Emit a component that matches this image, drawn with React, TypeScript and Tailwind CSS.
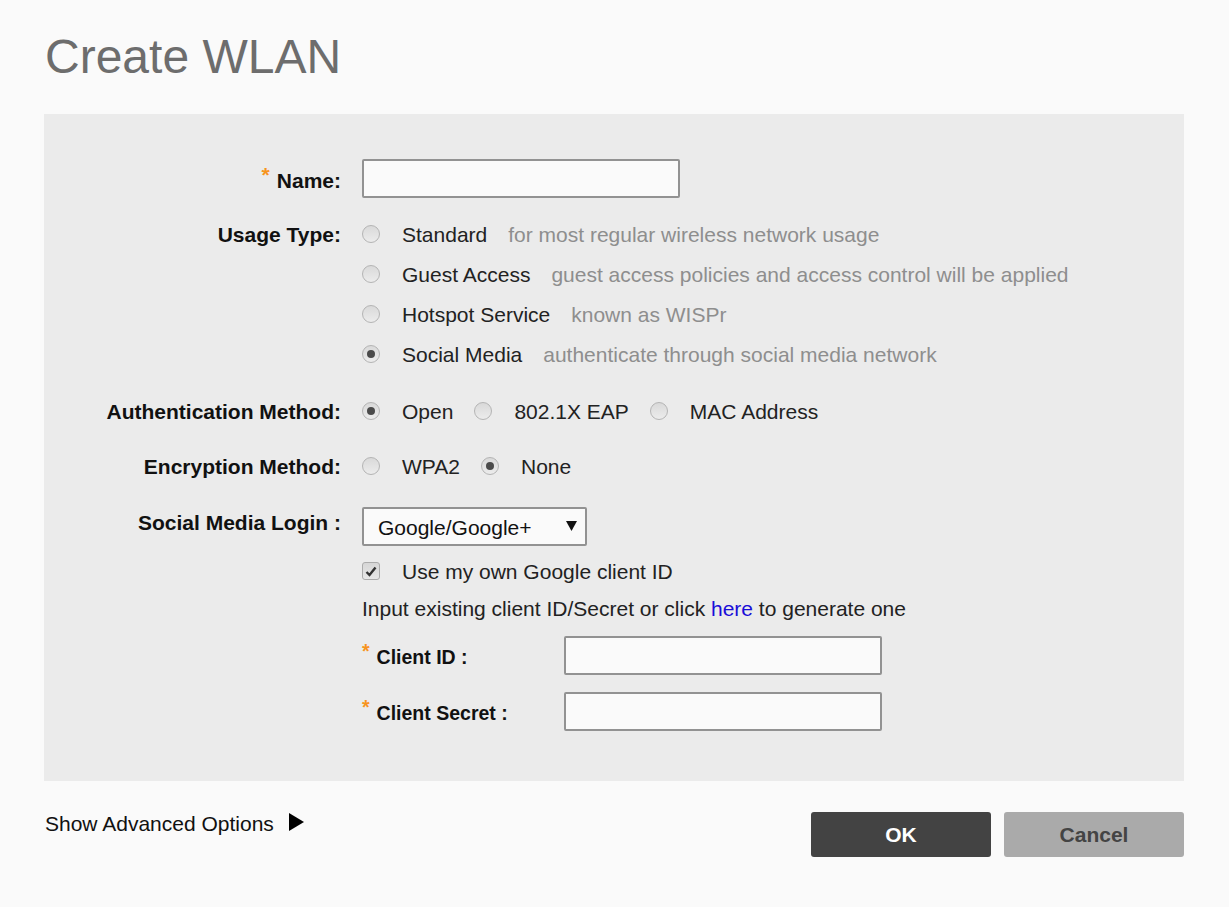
import React from "react";

function Radio({ checked = false }: { checked?: boolean }) {
  return (
    <span className="flex h-[18px] w-[18px] shrink-0 items-center justify-center rounded-full border border-[#b4b4b4] bg-gradient-to-b from-[#d9d9d9] to-[#ececec]">
      {checked && <span className="h-[8px] w-[8px] rounded-full bg-[#4a4a4a]" />}
    </span>
  );
}

function Star() {
  return <span className="relative -top-[6px] mr-[7px] text-[#f7941d]">*</span>;
}

function UsageOption({ label, desc, checked = false }: { label: string; desc: string; checked?: boolean }) {
  return (
    <div className="flex h-[40px] items-center">
      <Radio checked={checked} />
      <span className="relative top-px ml-[22px] text-[#222]">{label}</span>
      <span className="relative top-px ml-[21px] text-[#8e8e8e]">{desc}</span>
    </div>
  );
}

function InlineRadio({ label, checked = false, first = false }: { label: string; checked?: boolean; first?: boolean }) {
  return (
    <div className={`flex items-center ${first ? "" : "ml-[21px]"}`}>
      <Radio checked={checked} />
      <span className="relative top-px ml-[22px] text-[#222]">{label}</span>
    </div>
  );
}

export default function App() {
  return (
    <div className="min-h-[907px] w-[1229px] bg-[#fafafa] font-['Liberation_Sans',Arial,sans-serif] text-[21px] text-[#222]">
      <h1 className="ml-[45px] pt-[33px] text-[48px] leading-none text-[#6d6d6d]">Create WLAN</h1>

      <div className="ml-[44px] mt-[33px] w-[1140px] bg-[#ebebeb] pt-[45px] pb-[50px]">
        {/* Name */}
        <div className="flex h-[39px] items-center">
          <div className="relative top-[2px] w-[297px] text-right font-bold text-[#111]">
            <Star />Name:
          </div>
          <input className="ml-[21px] h-[39px] w-[318px] rounded-[2px] border-2 border-[#929292] bg-[#fafafa] outline-none" />
        </div>

        {/* Usage Type */}
        <div className="mt-[16px] flex items-start">
          <div className="relative top-px flex h-[40px] w-[297px] items-center justify-end font-bold text-[#111]">Usage Type:</div>
          <div className="ml-[21px] flex flex-col">
            <UsageOption label="Standard" desc="for most regular wireless network usage" />
            <UsageOption label="Guest Access" desc="guest access policies and access control will be applied" />
            <UsageOption label="Hotspot Service" desc="known as WISPr" />
            <UsageOption label="Social Media" desc="authenticate through social media network" checked />
          </div>
        </div>

        {/* Authentication */}
        <div className="mt-[17px] flex h-[40px] items-center">
          <div className="relative top-px w-[297px] text-right font-bold text-[#111]">Authentication Method:</div>
          <div className="ml-[21px] flex items-center">
            <InlineRadio label="Open" checked first />
            <InlineRadio label="802.1X EAP" />
            <InlineRadio label="MAC Address" />
          </div>
        </div>

        {/* Encryption */}
        <div className="mt-[15px] flex h-[40px] items-center">
          <div className="relative top-px w-[297px] text-right font-bold text-[#111]">Encryption Method:</div>
          <div className="ml-[21px] flex items-center">
            <InlineRadio label="WPA2" first />
            <InlineRadio label="None" checked />
          </div>
        </div>

        {/* Social Media Login */}
        <div className="mt-[21px] flex items-start">
          <div className="flex h-[31px] w-[297px] items-center justify-end font-bold text-[#111]">Social Media Login :</div>
          <div className="ml-[21px] flex flex-col">
            <div className="flex h-[39px] w-[225px] items-center justify-between rounded-[2px] border-2 border-[#929292] bg-[#fafafa] pl-[14px] pr-[8px]">
              <span className="relative top-px text-[#111]">Google/Google+</span>
              <svg width="11" height="10" viewBox="0 0 11 10" className="mt-[-2px]">
                <polygon points="0,0 11,0 5.5,10" fill="#111" />
              </svg>
            </div>
            <div className="mt-[5px] flex h-[40px] items-center">
              <span className="flex h-[18px] w-[18px] items-center justify-center rounded-[3px] border border-[#ababab] bg-gradient-to-b from-[#d6d6d6] to-[#e8e8e8]">
                <svg width="12" height="11" viewBox="0 0 12 11">
                  <path d="M1.5 6 L4.5 9 L10.5 1.5" fill="none" stroke="#333" strokeWidth="2.4" />
                </svg>
              </span>
              <span className="relative top-px ml-[22px] text-[#222]">Use my own Google client ID</span>
            </div>
            <div className="relative top-px flex h-[34px] items-center text-[#222]">
              Input existing client ID/Secret or click&nbsp;<span className="text-[#1a0dd8]">here</span>&nbsp;to generate one
            </div>
            <div className="mt-[11px] flex h-[39px] items-center">
              <div className="relative top-[2px] w-[202px] text-[19.5px] font-bold text-[#111]">
                <Star />Client ID :
              </div>
              <input className="h-[39px] w-[318px] rounded-[2px] border-2 border-[#929292] bg-[#fafafa] outline-none" />
            </div>
            <div className="mt-[17px] flex h-[39px] items-center">
              <div className="relative top-[2px] w-[202px] text-[19.5px] font-bold text-[#111]">
                <Star />Client Secret :
              </div>
              <input className="h-[39px] w-[318px] rounded-[2px] border-2 border-[#929292] bg-[#fafafa] outline-none" />
            </div>
          </div>
        </div>
      </div>

      {/* Footer */}
      <div className="ml-[44px] mt-[31px] flex w-[1140px] items-start justify-between">
        <div className="mt-[-4px] flex items-center pl-[1px] text-[#111]">
          <span>Show Advanced Options</span>
          <svg width="15" height="18" viewBox="0 0 15 18" className="ml-[15px] mt-[-4px]">
            <polygon points="0,0 15,9 0,18" fill="#000" />
          </svg>
        </div>
        <div className="flex gap-[13px]">
          <button className="h-[45px] w-[180px] rounded-[3px] bg-[#434343] font-bold text-white">OK</button>
          <button className="h-[45px] w-[180px] rounded-[3px] bg-[#aaaaaa] font-bold text-[#444]">Cancel</button>
        </div>
      </div>
    </div>
  );
}
